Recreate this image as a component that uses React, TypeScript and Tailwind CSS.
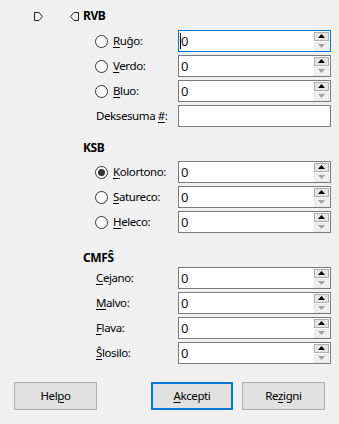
import React from "react";

function Radio({ checked }: { checked?: boolean }) {
  return (
    <span className="w-[13px] h-[13px] rounded-full border border-[#333333] bg-white flex items-center justify-center shrink-0">
      {checked && <span className="w-[7px] h-[7px] rounded-full bg-[#333333]" />}
    </span>
  );
}

function Spin({ focused, caret }: { focused?: boolean; caret?: boolean }) {
  return (
    <div
      className={`w-[153px] h-[22px] bg-white border flex items-center relative ${
        focused ? "border-[#0078d7]" : "border-[#7a7a7a]"
      }`}
    >
      <span className="pl-[2px] text-[13px] leading-none font-['Noto_Sans'] text-[#111] tracking-normal">0</span>
      {caret && <span className="absolute left-[1px] top-[2px] w-px h-[16px] bg-black" />}
      <div className="ml-auto mr-[1px] flex flex-col h-[19px] w-[15px] gap-px">
        <div className="h-[9px] border border-[#adadad] bg-[#e5e5e5] flex items-center justify-center">
          <svg width="7" height="4" viewBox="0 0 7 4">
            <polygon points="0,4 7,4 3.5,0" fill="#000" />
          </svg>
        </div>
        <div className="h-[9px] bg-[#f0f0f0] border border-[#e8e8e8] flex items-center justify-center">
          <svg width="7" height="4" viewBox="0 0 7 4">
            <polygon points="0,0 7,0 3.5,4" fill="#a0a0a0" />
          </svg>
        </div>
      </div>
    </div>
  );
}

function Plain() {
  return <div className="w-[153px] h-[22px] bg-white border border-[#7a7a7a]" />;
}

function RadioRow({
  pre,
  u,
  post,
  checked,
  children,
}: {
  pre?: string;
  u: string;
  post: string;
  checked?: boolean;
  children: React.ReactNode;
}) {
  return (
    <div className="flex items-center h-[22px]">
      <div className="w-[95px]" />
      <Radio checked={checked} />
      <span className="ml-[5px] w-[65px] whitespace-nowrap">
        {pre}
        <u className="underline-offset-2">{u}</u>
        {post}
      </span>
      {children}
    </div>
  );
}

function LabelRow({
  pre,
  u,
  post,
  children,
}: {
  pre?: string;
  u: string;
  post: string;
  children: React.ReactNode;
}) {
  return (
    <div className="flex items-center h-[22px]">
      <div className="w-[96px]" />
      <span className="w-[82px] whitespace-nowrap">
        {pre}
        <u className="underline-offset-2">{u}</u>
        {post}
      </span>
      {children}
    </div>
  );
}

function Btn({ pre, u, post, def, className }: { pre?: string; u: string; post: string; def?: boolean; className?: string }) {
  return (
    <div
      className={`h-[28px] bg-[#e1e1e1] flex items-center justify-center ${
        def ? "border-2 border-[#0078d7]" : "border border-[#adadad]"
      } ${className ?? ""}`}
    >
      <span>
        {pre}
        <u className="underline-offset-2">{u}</u>
        {post}
      </span>
    </div>
  );
}

export default function App() {
  return (
    <div className="w-[339px] h-[424px] bg-[#f0f0f0] text-[11.5px] leading-none text-black font-['Noto_Sans',sans-serif] tracking-[-0.4px]">
      <div className="h-[30px] pt-[2px] flex items-center">
        <svg className="ml-[34px]" width="9" height="9" viewBox="0 0 9 9">
          <path d="M0.5 0.5 H5 L8.5 4.5 L5 8.5 H0.5 Z" fill="none" stroke="#222" strokeWidth="1" />
        </svg>
        <svg className="ml-[27px]" width="9" height="9" viewBox="0 0 9 9">
          <path d="M8.5 0.5 H4 L0.5 4.5 L4 8.5 H8.5 Z" fill="none" stroke="#222" strokeWidth="1" />
        </svg>
        <span className="ml-[4px] font-bold text-[12px]">RVB</span>
      </div>
      <div className="flex flex-col gap-[3px]">
        <RadioRow u="R" post="uĝo:">
          <Spin focused caret />
        </RadioRow>
        <RadioRow u="V" post="erdo:">
          <Spin />
        </RadioRow>
        <RadioRow u="B" post="luo:">
          <Spin />
        </RadioRow>
        <LabelRow pre="Deksesuma " u="#" post=":">
          <Plain />
        </LabelRow>
      </div>
      <div className="h-[34px] pt-[8px] flex items-center pl-[83px] font-bold text-[12px]">KSB</div>
      <div className="flex flex-col gap-[3px]">
        <RadioRow u="K" post="olortono:" checked>
          <Spin />
        </RadioRow>
        <RadioRow u="S" post="atureco:">
          <Spin />
        </RadioRow>
        <RadioRow u="H" post="eleco:">
          <Spin />
        </RadioRow>
      </div>
      <div className="h-[34px] pt-[16px] flex items-center pl-[83px] font-bold text-[12px]">CMFŜ</div>
      <div className="flex flex-col gap-[3px]">
        <LabelRow u="C" post="ejano:">
          <Spin />
        </LabelRow>
        <LabelRow u="M" post="alvo:">
          <Spin />
        </LabelRow>
        <LabelRow u="F" post="lava:">
          <Spin />
        </LabelRow>
        <LabelRow u="Ŝ" post="losilo:">
          <Spin />
        </LabelRow>
      </div>
      <div className="flex mt-[18px] pl-[14px]">
        <Btn pre="Hel" u="p" post="o" className="w-[83px]" />
        <Btn u="A" post="kcepti" def className="w-[82px] ml-[54px]" />
        <Btn pre="Re" u="z" post="igni" className="w-[83px] ml-[9px]" />
      </div>
    </div>
  );
}
